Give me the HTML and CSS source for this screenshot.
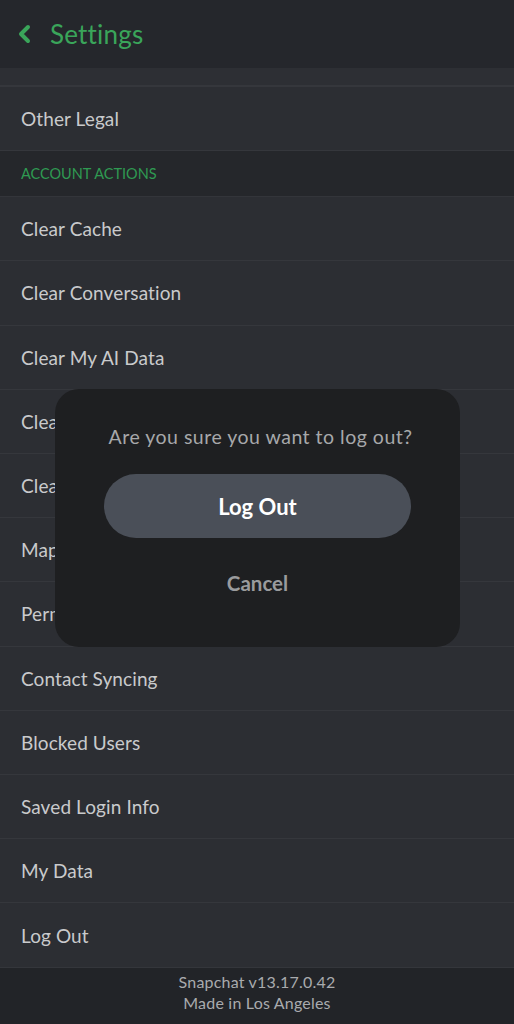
FILE: index.html
```html
<!DOCTYPE html>
<html>
<head>
<meta charset="utf-8">
<link rel="stylesheet" href="styles.css">
</head>
<body>
<div class="screen">
  <header class="topbar">
    <svg class="back" width="14" height="20" viewBox="0 0 14 20"><path d="M11 3 L4 10 L11 17" fill="none" stroke="#3aa55a" stroke-width="4" stroke-linecap="round" stroke-linejoin="round"/></svg>
    <span class="title">Settings</span>
  </header>
  <div class="list">
    <div class="stub"></div>
    <div class="row">Other Legal</div>
    <div class="section">ACCOUNT ACTIONS</div>
    <div class="row">Clear Cache</div>
    <div class="row">Clear Conversation</div>
    <div class="row">Clear My AI Data</div>
    <div class="row">Clear Search History</div>
    <div class="row">Clear Top Locations</div>
    <div class="row">Map Data</div>
    <div class="row">Permissions</div>
    <div class="row">Contact Syncing</div>
    <div class="row">Blocked Users</div>
    <div class="row">Saved Login Info</div>
    <div class="row">My Data</div>
    <div class="row">Log Out</div>
  </div>
  <footer class="footer">
    <div>Snapchat v13.17.0.42</div>
    <div>Made in Los Angeles</div>
  </footer>
  <div class="dialog">
    <div class="question">Are you sure you want to log out?</div>
    <div class="primary">Log Out</div>
    <div class="cancel">Cancel</div>
  </div>
</div>
</body>
</html>
```
FILE: styles.css
```css
* { box-sizing: border-box; }
html, body { margin: 0; padding: 0; background: #2c2e33; }
body { font-family: Lato, "Noto Sans", sans-serif; }
.screen { position: relative; width: 514px; height: 1024px; overflow: hidden; background: #2c2e33; display: flex; flex-direction: column; }
.topbar { height: 68px; background: #25272c; display: flex; align-items: center; padding-left: 17px; gap: 19px; flex-shrink: 0; }
.back { display: block; margin-top: -1px; }
.title { color: #3aa55a; font-size: 26px; letter-spacing: 0.2px; margin-top: -1px; }
.list { display: flex; flex-direction: column; flex: 1; }
.stub { height: 19px; flex-shrink: 0; background: #2d2f34; border-bottom: 2px solid #35373c; }
.row { height: 64.2px; flex-shrink: 0; display: flex; align-items: center; padding-left: 21px; color: #c9cacc; font-size: 19px; letter-spacing: 0.1px; background: #2c2e33; border-bottom: 1px solid #35373c; }
.section { height: 46px; flex-shrink: 0; display: flex; align-items: center; padding-left: 21px; color: #2f9a52; font-size: 14.5px; background: #25272b; border-bottom: 1px solid #33353a; }
.list .row:last-child { border-bottom: none; }
.footer { height: 58px; flex-shrink: 0; background: #222428; border-top: 1px solid #34363b; color: #a9abae; font-size: 16px; letter-spacing: 0.2px; text-align: center; line-height: 21px; padding-top: 3px; }
.dialog { position: absolute; left: 55px; top: 389px; width: 405px; height: 258px; background: #1e1f21; border-radius: 24px; display: flex; flex-direction: column; align-items: center; }
.question { margin-top: 36px; padding-left: 6px; color: #a7a8aa; font-size: 19.5px; letter-spacing: 0.5px; }
.primary { margin-top: 26px; width: 307px; height: 64px; border-radius: 32px; background: #4a4f58; color: #ffffff; font-weight: 700; font-size: 22px; display: flex; align-items: center; justify-content: center; }
.cancel { margin-top: 33px; color: #9a9b9d; font-weight: 700; font-size: 20.5px; }
```
